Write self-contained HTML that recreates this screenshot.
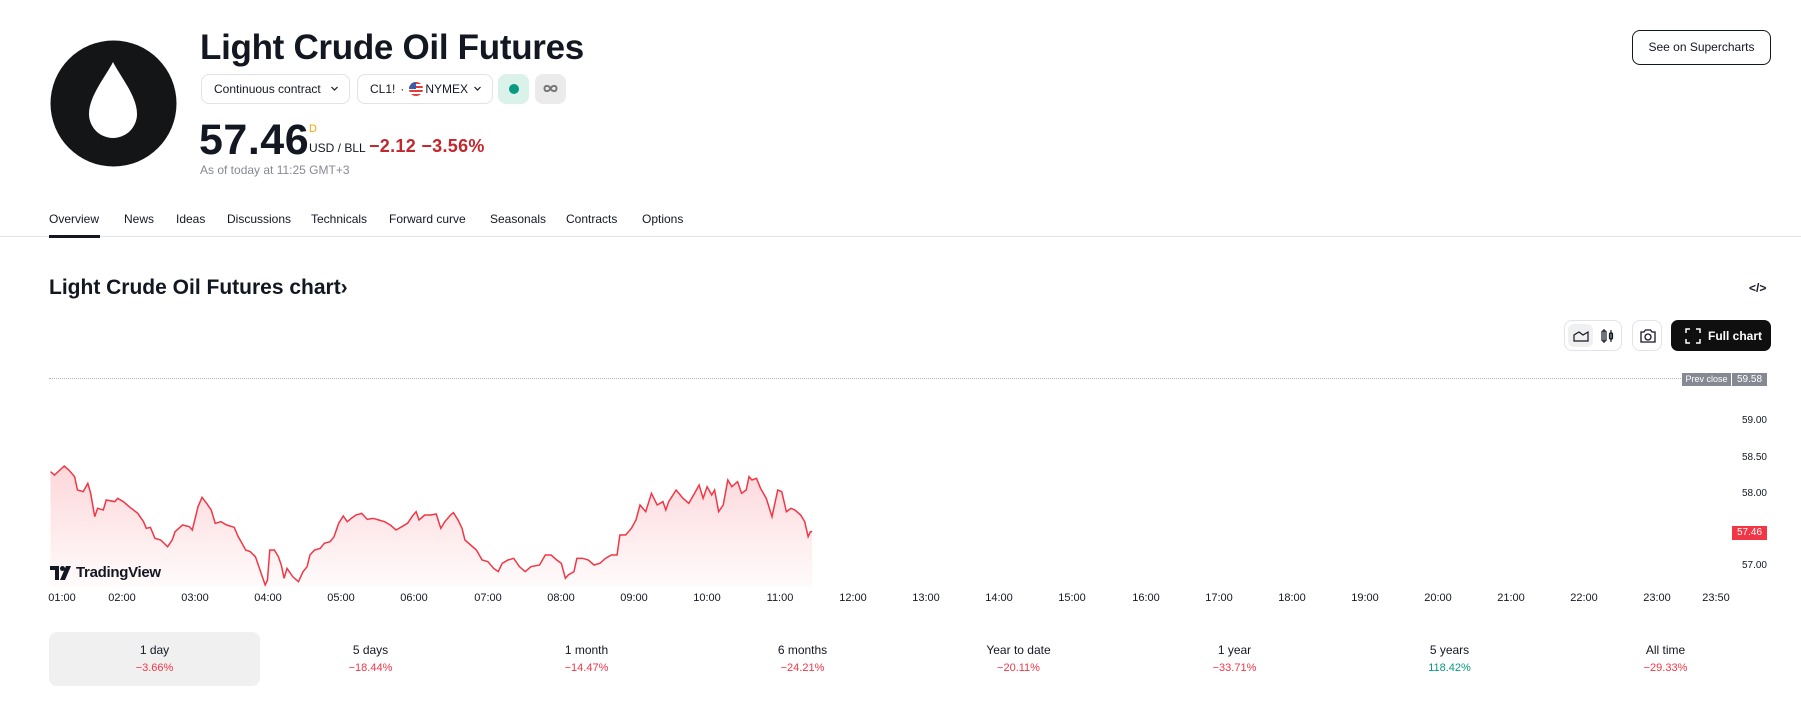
<!DOCTYPE html>
<html><head><meta charset="utf-8">
<style>
*{margin:0;padding:0;box-sizing:border-box}
body{width:1801px;height:711px;overflow:hidden;background:#fff;font-family:"Liberation Sans",Arial,sans-serif;color:#131722;position:relative}
.a{position:absolute;white-space:nowrap}
.btn{position:absolute;border:1px solid #e0e3eb;border-radius:8px;font-size:12px;display:flex;align-items:center}
.chev{position:absolute;right:10px;top:9px}
.tab{position:absolute;top:212px;font-size:12px;color:#131722}
.xl{position:absolute;top:592px;font-size:11px;color:#131722;transform:translateX(-50%)}
.yl{position:absolute;left:1741px;font-size:10px;color:#131722;width:26px;text-align:right}
.per{position:absolute;top:632px;width:211px;height:54px;border-radius:8px;text-align:center}
.per .l{font-size:12px;margin-top:11px}
.per .v{font-size:11px;margin-top:5px;color:#f23645}
</style></head><body>

<svg class="a" style="left:50px;top:40px" width="127" height="127" viewBox="0 0 127 127">
<circle cx="63.5" cy="63.5" r="63" fill="#141517"/>
<path d="M63 22 C56 36 39 56 39 74 A24 24 0 0 0 87 74 C87 56 70 36 63 22Z" fill="#fff"/>
</svg>

<div class="a" style="left:200px;top:28px;font-size:35px;font-weight:bold;letter-spacing:-0.3px">Light Crude Oil Futures</div>

<div class="btn" style="left:201px;top:74px;width:149px;height:30px;padding-left:12px">Continuous contract<svg class="chev" width="9" height="9" viewBox="0 0 9 9"><path d="M1.5 3 4.5 6 7.5 3" fill="none" stroke="#131722" stroke-width="1.2"/></svg></div>
<div class="btn" style="left:357px;top:74px;width:136px;height:30px;padding-left:12px">CL1! <span style="margin:0 5px">·</span>
<svg width="14" height="14" viewBox="0 0 14 14" style="margin-right:2px"><defs><clipPath id="c"><circle cx="7" cy="7" r="7"/></clipPath></defs><g clip-path="url(#c)"><rect width="14" height="14" fill="#fff"/><rect y="0" width="14" height="2" fill="#e53b3b"/><rect y="4" width="14" height="2" fill="#e53b3b"/><rect y="8" width="14" height="2" fill="#e53b3b"/><rect y="12" width="14" height="2" fill="#e53b3b"/><rect width="7" height="7" fill="#3c5ba8"/></g></svg>NYMEX<svg class="chev" width="9" height="9" viewBox="0 0 9 9"><path d="M1.5 3 4.5 6 7.5 3" fill="none" stroke="#131722" stroke-width="1.2"/></svg></div>
<div class="a" style="left:498px;top:74px;width:31px;height:30px;border-radius:8px;background:#daf2ea"><div style="position:absolute;left:11px;top:10px;width:10px;height:10px;border-radius:50%;background:#089981"></div></div>
<div class="a" style="left:535px;top:74px;width:31px;height:30px;border-radius:8px;background:#ebebeb"><svg style="position:absolute;left:8px;top:10px" width="15" height="9" viewBox="0 0 15 9"><path d="M7.5 4.5C5.5 1 1.5 1 1.5 4.5S5.5 8 7.5 4.5 13.5 1 13.5 4.5 9.5 8 7.5 4.5Z" fill="none" stroke="#777" stroke-width="2"/></svg></div>

<div class="a" style="left:199px;top:116px;font-size:43px;font-weight:bold;letter-spacing:0.5px">57.46</div>
<div class="a" style="left:309px;top:123px;font-size:11px;color:#f7a600">D</div>
<div class="a" style="left:309px;top:141px;font-size:12px">USD / BLL</div>
<div class="a" style="left:369px;top:136px;font-size:18px;color:#c1272d;font-weight:bold;letter-spacing:0.3px">−2.12 −3.56%</div>
<div class="a" style="left:200px;top:163px;font-size:12px;color:#868993">As of today at 11:25 GMT+3</div>

<div class="a" style="left:1632px;top:30px;width:139px;height:35px;border:1px solid #131722;border-radius:8px;font-size:12px;text-align:center;line-height:33px">See on Supercharts</div>

<div class="tab" style="left:49px">Overview</div>
<div class="tab" style="left:124px">News</div>
<div class="tab" style="left:176px">Ideas</div>
<div class="tab" style="left:227px">Discussions</div>
<div class="tab" style="left:311px">Technicals</div>
<div class="tab" style="left:389px">Forward curve</div>
<div class="tab" style="left:490px">Seasonals</div>
<div class="tab" style="left:566px">Contracts</div>
<div class="tab" style="left:642px">Options</div>
<div class="a" style="left:0;top:236px;width:1801px;height:1px;background:#e0e3eb"></div>
<div class="a" style="left:49px;top:235px;width:51px;height:3px;background:#131722"></div>

<div class="a" style="left:49px;top:276px;font-size:21px;font-weight:bold">Light Crude Oil Futures chart›</div>
<div class="a" style="left:1749px;top:281px;font-size:12px;font-weight:bold">&lt;/&gt;</div>

<div class="a" style="left:1564px;top:320px;width:58px;height:31px;border:1px solid #e0e3eb;border-radius:8px">
<div style="position:absolute;left:3px;top:3px;width:25px;height:23px;background:#f0f0f0;border-radius:6px"></div>
<svg style="position:absolute;left:8px;top:8px" width="16" height="14" viewBox="0 0 16 14"><path d="M1 12V6L6 3 10 6 15 3V12Z" fill="none" stroke="#131722" stroke-width="1.2"/></svg>
<svg style="position:absolute;left:35px;top:7px" width="16" height="16" viewBox="0 0 16 16"><rect x="2" y="3" width="4" height="10" rx="1" fill="none" stroke="#131722" stroke-width="1.2"/><line x1="4" y1="1" x2="4" y2="15" stroke="#131722" stroke-width="1.2"/><rect x="9.5" y="5" width="3" height="6" rx="1" fill="none" stroke="#131722" stroke-width="1.2"/><line x1="11" y1="2" x2="11" y2="14" stroke="#131722" stroke-width="1.2"/></svg>
</div>
<div class="a" style="left:1632px;top:320px;width:30px;height:31px;border:1px solid #e0e3eb;border-radius:8px">
<svg style="position:absolute;left:6px;top:7px" width="18" height="16" viewBox="0 0 18 16"><path d="M2 4H5L6.5 2H11.5L13 4H16V14H2Z" fill="none" stroke="#131722" stroke-width="1.3"/><circle cx="9" cy="9" r="3" fill="none" stroke="#131722" stroke-width="1.3"/></svg>
</div>
<div class="a" style="left:1671px;top:320px;width:100px;height:31px;background:#0f0f0f;border-radius:7px;color:#fff;font-size:12px;font-weight:bold">
<svg style="position:absolute;left:14px;top:8px" width="16" height="16" viewBox="0 0 16 16" fill="none" stroke="#fff" stroke-width="1.5"><path d="M1 5V1H5M11 1H15V5M15 11V15H11M5 15H1V11"/></svg>
<span style="position:absolute;left:37px;top:9px">Full chart</span></div>

<div class="a" style="left:49px;top:378px;width:1634px;border-top:1px dotted #b2b5be"></div>
<div class="a" style="left:1682px;top:373px;width:49px;height:13px;background:#868993;color:#fff;font-size:9px;text-align:center;line-height:13px">Prev close</div>
<div class="a" style="left:1732px;top:373px;width:35px;height:13px;background:#868993;color:#fff;font-size:10px;text-align:center;line-height:13px">59.58</div>
<div class="yl" style="top:415px">59.00</div>
<div class="yl" style="top:452px">58.50</div>
<div class="yl" style="top:488px">58.00</div>
<div class="a" style="left:1732px;top:526px;width:35px;height:14px;background:#f23645;color:#fff;font-size:10px;text-align:center;line-height:14px">57.46</div>
<div class="yl" style="top:560px">57.00</div>

<svg class="a" style="left:0;top:440px" width="900" height="271" viewBox="0 0 1568 813" preserveAspectRatio="none">
<defs><linearGradient id="g" x1="0" y1="0" x2="0" y2="1"><stop offset="0" stop-color="#f23645" stop-opacity="0.2"/><stop offset="1" stop-color="#f23645" stop-opacity="0.02"/></linearGradient></defs>
<path d="M88,95 95,105 112,78 120,90 130,110 135,150 145,155 153,130 158,160 165,230 170,205 180,210 185,180 200,185 205,175 215,185 225,200 240,220 250,245 255,265 262,262 270,295 280,300 292,320 300,300 305,275 318,255 330,260 335,270 345,200 352,172 360,190 368,210 375,250 385,245 395,255 408,262 415,290 420,305 428,330 436,335 445,350 450,375 458,415 462,435 466,420 470,330 478,330 485,350 490,375 495,415 500,385 510,410 520,425 528,395 535,380 540,345 548,330 558,325 565,310 575,305 582,290 590,250 598,228 605,245 612,235 620,225 630,220 640,238 650,235 660,240 670,245 680,255 690,270 700,260 710,250 720,225 725,215 730,240 740,225 750,225 760,222 768,265 775,245 785,225 790,218 798,240 805,265 810,300 820,315 830,330 840,360 850,365 860,385 868,395 875,370 885,360 895,355 905,380 915,395 925,380 940,375 950,345 960,345 970,360 978,370 985,415 990,405 1000,395 1005,355 1015,355 1025,360 1035,375 1045,370 1055,355 1065,345 1075,345 1080,285 1090,285 1100,265 1108,240 1115,195 1125,215 1135,160 1145,195 1155,185 1160,210 1165,185 1178,150 1190,175 1200,190 1210,160 1218,135 1225,175 1232,140 1240,165 1245,150 1252,215 1260,195 1268,120 1275,140 1285,125 1292,160 1300,150 1305,110 1310,120 1318,115 1325,145 1335,175 1345,230 1355,150 1362,155 1370,215 1378,205 1385,210 1395,225 1402,245 1408,290 1412,275 1415,275 1415,440 88,440Z" fill="url(#g)"/>
<path d="M88,95 95,105 112,78 120,90 130,110 135,150 145,155 153,130 158,160 165,230 170,205 180,210 185,180 200,185 205,175 215,185 225,200 240,220 250,245 255,265 262,262 270,295 280,300 292,320 300,300 305,275 318,255 330,260 335,270 345,200 352,172 360,190 368,210 375,250 385,245 395,255 408,262 415,290 420,305 428,330 436,335 445,350 450,375 458,415 462,435 466,420 470,330 478,330 485,350 490,375 495,415 500,385 510,410 520,425 528,395 535,380 540,345 548,330 558,325 565,310 575,305 582,290 590,250 598,228 605,245 612,235 620,225 630,220 640,238 650,235 660,240 670,245 680,255 690,270 700,260 710,250 720,225 725,215 730,240 740,225 750,225 760,222 768,265 775,245 785,225 790,218 798,240 805,265 810,300 820,315 830,330 840,360 850,365 860,385 868,395 875,370 885,360 895,355 905,380 915,395 925,380 940,375 950,345 960,345 970,360 978,370 985,415 990,405 1000,395 1005,355 1015,355 1025,360 1035,375 1045,370 1055,355 1065,345 1075,345 1080,285 1090,285 1100,265 1108,240 1115,195 1125,215 1135,160 1145,195 1155,185 1160,210 1165,185 1178,150 1190,175 1200,190 1210,160 1218,135 1225,175 1232,140 1240,165 1245,150 1252,215 1260,195 1268,120 1275,140 1285,125 1292,160 1300,150 1305,110 1310,120 1318,115 1325,145 1335,175 1345,230 1355,150 1362,155 1370,215 1378,205 1385,210 1395,225 1402,245 1408,290 1412,275 1415,275" fill="none" stroke="#f23645" stroke-width="1.5" vector-effect="non-scaling-stroke"/>
</svg>
<svg class="a" style="left:50px;top:566px" width="22" height="14" viewBox="0 0 22 14"><path d="M0 0H9V14H5V4H0Z" fill="#131722"/><circle cx="12.5" cy="2.5" r="2.5" fill="#131722"/><path d="M16 0H21L15 14H10Z" fill="#131722"/></svg>
<div class="a" style="left:76px;top:564px;font-size:15px;font-weight:bold;color:#131722;letter-spacing:-0.3px">TradingView</div>

<div class="xl" style="left:62px">01:00</div>
<div class="xl" style="left:122px">02:00</div>
<div class="xl" style="left:195px">03:00</div>
<div class="xl" style="left:268px">04:00</div>
<div class="xl" style="left:341px">05:00</div>
<div class="xl" style="left:414px">06:00</div>
<div class="xl" style="left:488px">07:00</div>
<div class="xl" style="left:561px">08:00</div>
<div class="xl" style="left:634px">09:00</div>
<div class="xl" style="left:707px">10:00</div>
<div class="xl" style="left:780px">11:00</div>
<div class="xl" style="left:853px">12:00</div>
<div class="xl" style="left:926px">13:00</div>
<div class="xl" style="left:999px">14:00</div>
<div class="xl" style="left:1072px">15:00</div>
<div class="xl" style="left:1146px">16:00</div>
<div class="xl" style="left:1219px">17:00</div>
<div class="xl" style="left:1292px">18:00</div>
<div class="xl" style="left:1365px">19:00</div>
<div class="xl" style="left:1438px">20:00</div>
<div class="xl" style="left:1511px">21:00</div>
<div class="xl" style="left:1584px">22:00</div>
<div class="xl" style="left:1657px">23:00</div>
<div class="xl" style="left:1716px">23:50</div>

<div class="per" style="left:49px;background:#f0f0f0"><div class="l">1 day</div><div class="v">−3.66%</div></div>
<div class="per" style="left:265px"><div class="l">5 days</div><div class="v">−18.44%</div></div>
<div class="per" style="left:481px"><div class="l">1 month</div><div class="v">−14.47%</div></div>
<div class="per" style="left:697px"><div class="l">6 months</div><div class="v">−24.21%</div></div>
<div class="per" style="left:913px"><div class="l">Year to date</div><div class="v">−20.11%</div></div>
<div class="per" style="left:1129px"><div class="l">1 year</div><div class="v">−33.71%</div></div>
<div class="per" style="left:1344px"><div class="l">5 years</div><div class="v" style="color:#089981">118.42%</div></div>
<div class="per" style="left:1560px"><div class="l">All time</div><div class="v">−29.33%</div></div>
</body></html>
